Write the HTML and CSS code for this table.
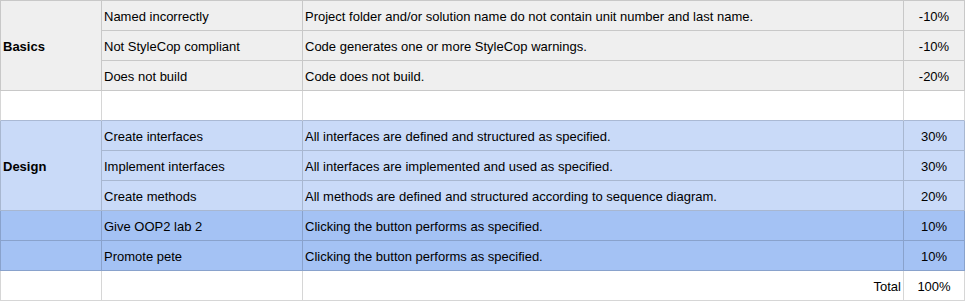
FILE: index.html
```html
<!DOCTYPE html>
<html>
<head>
<meta charset="utf-8">
<link rel="stylesheet" href="styles.css">
</head>
<body>
<table class="rubric">
  <colgroup>
    <col class="c1"><col class="c2"><col class="c3"><col class="c4">
  </colgroup>
  <tbody>
    <tr class="gray top">
      <td class="first cat" rowspan="3">Basics</td>
      <td>Named incorrectly</td>
      <td>Project folder and/or solution name do not contain unit number and last name.</td>
      <td class="pct">-10%</td>
    </tr>
    <tr class="gray">
      <td>Not StyleCop compliant</td>
      <td>Code generates one or more StyleCop warnings.</td>
      <td class="pct">-10%</td>
    </tr>
    <tr class="gray">
      <td>Does not build</td>
      <td>Code does not build.</td>
      <td class="pct">-20%</td>
    </tr>
    <tr class="white before-blue">
      <td class="first"></td>
      <td></td>
      <td></td>
      <td class="pct"></td>
    </tr>
    <tr class="light">
      <td class="first cat" rowspan="3">Design</td>
      <td>Create interfaces</td>
      <td>All interfaces are defined and structured as specified.</td>
      <td class="pct">30%</td>
    </tr>
    <tr class="light">
      <td>Implement interfaces</td>
      <td>All interfaces are implemented and used as specified.</td>
      <td class="pct">30%</td>
    </tr>
    <tr class="light">
      <td>Create methods</td>
      <td>All methods are defined and structured according to sequence diagram.</td>
      <td class="pct">20%</td>
    </tr>
    <tr class="blue">
      <td class="first"></td>
      <td>Give OOP2 lab 2</td>
      <td>Clicking the button performs as specified.</td>
      <td class="pct">10%</td>
    </tr>
    <tr class="blue">
      <td class="first"></td>
      <td>Promote pete</td>
      <td>Clicking the button performs as specified.</td>
      <td class="pct">10%</td>
    </tr>
    <tr class="white">
      <td class="first"></td>
      <td></td>
      <td class="total">Total</td>
      <td class="pct">100%</td>
    </tr>
  </tbody>
</table>
</body>
</html>
```

FILE: styles.css
```css
html, body {
  margin: 0;
  padding: 0;
  background: #ffffff;
}

.rubric {
  border-collapse: separate;
  border-spacing: 0;
  table-layout: fixed;
  width: 965px;
  font-family: "Liberation Sans", Arial, sans-serif;
  font-size: 13px;
  line-height: 15px;
  color: #000000;
}

.c1 { width: 102px; }
.c2 { width: 201px; }
.c3 { width: 601px; }
.c4 { width: 61px; }

.rubric td {
  height: 27px;
  padding: 2px 2px 0 2px;
  vertical-align: middle;
  white-space: nowrap;
  overflow: hidden;
  border-right: 1px solid rgba(0, 0, 0, 0.16);
  border-bottom: 1px solid rgba(0, 0, 0, 0.16);
}

.rubric tr.top td {
  border-top: 1px solid rgba(0, 0, 0, 0.16);
}

.rubric td.first {
  border-left: 1px solid rgba(0, 0, 0, 0.16);
}

.rubric td.cat {
  font-weight: bold;
}

.rubric td.pct {
  text-align: center;
}

.rubric td.total {
  text-align: right;
}

.gray td { background: #efefef; }
.white td { background: #ffffff; }
.light td { background: #c9daf8; }
.blue td { background: #a4c2f4; }

.before-blue td {
  border-bottom-color: #aab9d4;
}
```
